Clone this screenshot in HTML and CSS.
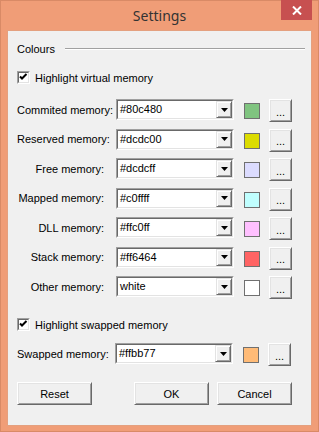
FILE: index.html
```html
<!DOCTYPE html>
<html lang="en">
<head>
    <meta charset="UTF-8" />
    <title>Settings</title>
    <link rel="stylesheet" href="styles.css">
</head>
<body>
    <div class="window">
        <div class="titlebar">
            <span></span>
            <span class="title">Settings</span>
            <button class="close" type="button" aria-label="Close">
                <svg width="10" height="9" viewBox="0 0 10 9">
                    <path d="M1 0.5 L9 8.5 M9 0.5 L1 8.5" stroke="#fff" stroke-width="2" fill="none" />
                </svg>
            </button>
        </div>

        <div class="client">
            <div class="group-head">
                <span>Colours</span>
                <span class="rule"></span>
            </div>

            <label class="check check-virtual">
                <span class="box"><span class="box-in">
                    <svg width="9" height="9" viewBox="0 0 9 9"><path d="M1 3.5 L3 5.5 L7.5 1" stroke="#000" stroke-width="2" fill="none" /></svg>
                </span></span>
                Highlight virtual memory
            </label>

            <div class="colour-grid">
                <span class="label">Commited memory:</span>
                <div class="combo"><div class="combo-in"><span class="combo-text">#80c480</span><span class="drop"><svg width="7" height="4" viewBox="0 0 7 4"><path d="M0 0 H7 L3.5 4 Z" fill="#000" /></svg></span></div></div>
                <span class="swatch" style="background:#80c480"></span>
                <button class="btn dots" type="button">...</button>

                <span class="label">Reserved memory:</span>
                <div class="combo"><div class="combo-in"><span class="combo-text">#dcdc00</span><span class="drop"><svg width="7" height="4" viewBox="0 0 7 4"><path d="M0 0 H7 L3.5 4 Z" fill="#000" /></svg></span></div></div>
                <span class="swatch" style="background:#dcdc00"></span>
                <button class="btn dots" type="button">...</button>

                <span class="label">Free memory:</span>
                <div class="combo"><div class="combo-in"><span class="combo-text">#dcdcff</span><span class="drop"><svg width="7" height="4" viewBox="0 0 7 4"><path d="M0 0 H7 L3.5 4 Z" fill="#000" /></svg></span></div></div>
                <span class="swatch" style="background:#dcdcff"></span>
                <button class="btn dots" type="button">...</button>

                <span class="label">Mapped memory:</span>
                <div class="combo"><div class="combo-in"><span class="combo-text">#c0ffff</span><span class="drop"><svg width="7" height="4" viewBox="0 0 7 4"><path d="M0 0 H7 L3.5 4 Z" fill="#000" /></svg></span></div></div>
                <span class="swatch" style="background:#c0ffff"></span>
                <button class="btn dots" type="button">...</button>

                <span class="label">DLL memory:</span>
                <div class="combo"><div class="combo-in"><span class="combo-text">#ffc0ff</span><span class="drop"><svg width="7" height="4" viewBox="0 0 7 4"><path d="M0 0 H7 L3.5 4 Z" fill="#000" /></svg></span></div></div>
                <span class="swatch" style="background:#ffc0ff"></span>
                <button class="btn dots" type="button">...</button>

                <span class="label">Stack memory:</span>
                <div class="combo"><div class="combo-in"><span class="combo-text">#ff6464</span><span class="drop"><svg width="7" height="4" viewBox="0 0 7 4"><path d="M0 0 H7 L3.5 4 Z" fill="#000" /></svg></span></div></div>
                <span class="swatch" style="background:#ff6464"></span>
                <button class="btn dots" type="button">...</button>

                <span class="label">Other memory:</span>
                <div class="combo"><div class="combo-in"><span class="combo-text">white</span><span class="drop"><svg width="7" height="4" viewBox="0 0 7 4"><path d="M0 0 H7 L3.5 4 Z" fill="#000" /></svg></span></div></div>
                <span class="swatch" style="background:#ffffff"></span>
                <button class="btn dots" type="button">...</button>
            </div>

            <label class="check check-swapped">
                <span class="box"><span class="box-in">
                    <svg width="9" height="9" viewBox="0 0 9 9"><path d="M1 3.5 L3 5.5 L7.5 1" stroke="#000" stroke-width="2" fill="none" /></svg>
                </span></span>
                Highlight swapped memory
            </label>

            <div class="colour-grid swap-row">
                <span class="label">Swapped memory:</span>
                <div class="combo"><div class="combo-in"><span class="combo-text">#ffbb77</span><span class="drop"><svg width="7" height="4" viewBox="0 0 7 4"><path d="M0 0 H7 L3.5 4 Z" fill="#000" /></svg></span></div></div>
                <span class="swatch" style="background:#ffbb77"></span>
                <button class="btn dots" type="button">...</button>
            </div>

            <div class="actions">
                <button class="btn wide" type="button">Reset</button>
                <button class="btn wide ok" type="button">OK</button>
                <button class="btn wide" type="button">Cancel</button>
            </div>
        </div>
    </div>
</body>
</html>
```

FILE: styles.css
```css
body {
    margin: 0;
    font-family: "Liberation Sans", Arial, sans-serif;
    font-size: 11px;
    color: #000;
}

.window {
    width: 319px;
    height: 432px;
    box-sizing: border-box;
    display: flex;
    flex-direction: column;
    padding: 0 6px 5px;
    background-color: #f09d77; /* win8 salmon frame */
    border: 1px solid #d98a66;
}

.titlebar {
    height: 29px;
    display: grid;
    grid-template-columns: 1fr auto 1fr;
}

.title {
    align-self: center;
    font-family: "Noto Sans", sans-serif;
    font-size: 14px;
    color: #333;
    margin-top: -1px;
}

.close {
    justify-self: end;
    width: 31px;
    height: 20px;
    margin-top: -1px;
    padding: 0;
    border: none;
    background-color: #c75050;
    display: flex;
    align-items: center;
    justify-content: center;
}

.client {
    flex: 1;
    display: flex;
    flex-direction: column;
    padding: 0 6px 0 9px;
    background-color: #f0f0f0;
    border: 1px solid #e4a07f;
}

.group-head {
    display: flex;
    align-items: center;
    height: 13px;
    margin-top: 11px;
}

.rule {
    flex: 1;
    margin-left: 10px;
    border-top: 1px solid #a0a0a0;
    border-bottom: 1px solid #fff;
}

.check {
    display: flex;
    align-items: center;
    gap: 5px;
    height: 13px;
}

.check-virtual {
    margin-top: 16px;
}

.check-swapped {
    margin-top: 19px;
}

.box {
    width: 13px;
    height: 13px;
    box-sizing: border-box;
    border: 1px solid;
    border-color: #a0a0a0 #fff #fff #a0a0a0;
}

.box-in {
    display: flex;
    align-items: center;
    justify-content: center;
    height: 100%;
    box-sizing: border-box;
    border: 1px solid;
    border-color: #696969 #e3e3e3 #e3e3e3 #696969;
    background: #fff;
}

/* label | combo | swatch | "..." button, trailing gaps folded into the columns */
.colour-grid {
    display: grid;
    grid-template-columns: 99px 128px 25px 23px;
    grid-auto-rows: 23px;
    row-gap: 6.5px;
    margin-top: 15px;
    width: 275px;
}

.label {
    align-self: center;
    text-align: right;
    padding-right: 12px;
    margin-top: -2px;
    white-space: nowrap;
}

.swap-row {
    margin-top: 12px;
}

.swap-row .label {
    text-align: left;
}

.swap-row .combo,
.swap-row .swatch,
.swap-row .dots {
    margin-left: -1px;
}

.combo {
    width: 118px;
    height: 21px;
    box-sizing: border-box;
    border: 1px solid;
    border-color: #a0a0a0 #fff #fff #a0a0a0;
}

.combo-in {
    display: flex;
    height: 100%;
    box-sizing: border-box;
    border: 1px solid;
    border-color: #696969 #e3e3e3 #e3e3e3 #696969;
    background: #fff;
}

.combo-text {
    flex: 1;
    padding-left: 2px;
    line-height: 17px;
}

.drop {
    width: 16px;
    height: 17px;
    box-sizing: border-box;
    display: flex;
    align-items: center;
    justify-content: center;
    background: #f0f0f0;
    border: 1px solid;
    border-color: #e3e3e3 #696969 #696969 #e3e3e3;
    box-shadow: inset 1px 1px #fff, inset -1px -1px #a0a0a0;
}

.swatch {
    width: 16px;
    height: 16px;
    box-sizing: border-box;
    margin-top: 4px;
    border: 1px solid #707070;
}

.btn {
    font: inherit;
    color: #000;
    padding: 0;
    box-sizing: border-box;
    background: #f0f0f0;
    border: 1px solid;
    border-color: #fff #696969 #696969 #fff;
    box-shadow: inset 1px 1px #e3e3e3, inset -1px -1px #a0a0a0;
}

.dots {
    width: 23px;
    height: 23px;
    padding-top: 2px;
}

.actions {
    display: flex;
    gap: 8px;
    width: 275px;
    margin-top: 16px;
}

.wide {
    width: 75px;
    height: 23px;
}

.ok {
    margin-left: auto;
}
```
